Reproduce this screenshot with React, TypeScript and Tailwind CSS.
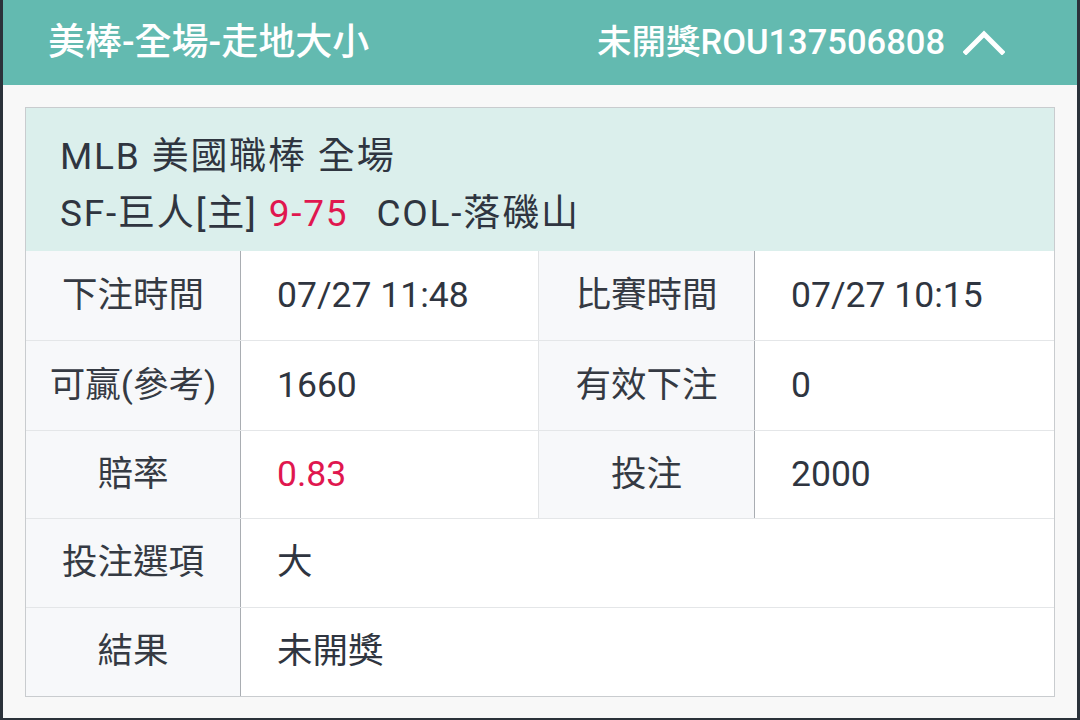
import React from "react";

const font = { fontFamily: 'Roboto, "Noto Sans CJK TC", "Noto Sans", sans-serif' };

function Row({ cols, h, children, top = true }: { cols: string; h: string; children: React.ReactNode; top?: boolean }) {
  return (
    <div className={"grid " + cols + " " + h + (top ? " border-t border-[#e4e6e8]" : "")}>
      {children}
    </div>
  );
}

function Label({ children }: { children: React.ReactNode }) {
  return (
    <div className="flex items-center justify-center bg-[#f7f8fa] border-r border-[#a9adb2] text-[#353a43]">
      {children}
    </div>
  );
}

function Value({ children, className = "" }: { children: React.ReactNode; className?: string }) {
  return (
    <div className={"flex items-center bg-white pl-[36px] text-[#2f3540] " + className}>
      {children}
    </div>
  );
}

const four = "grid-cols-[215px_298px_216px_1fr]";
const two = "grid-cols-[215px_1fr]";

export default function App() {
  return (
    <div className="w-[1080px] h-[720px] overflow-hidden bg-[#2b323a] pl-[3px] pr-[3px] pb-[2px]" style={font}>
      <div className="w-full h-full bg-[#f8f8f8] flex flex-col">
        <div className="h-[85px] bg-[#63bab0] flex items-center justify-between pl-[45px] pr-[72px] text-white font-medium shrink-0">
          <span className="text-[37px]">美棒-全場-走地大小</span>
          <div className="flex items-center">
            <span className="text-[34.5px]">未開獎ROU137506808</span>
            <svg className="ml-[18px] mb-[4px]" width="42" height="28" viewBox="0 0 42 28">
              <polyline points="3,25 21,7 39,25" fill="none" stroke="white" strokeWidth="5" strokeLinecap="square" />
            </svg>
          </div>
        </div>
        <div className="pt-[22px] pl-[22px] pr-[22px]">
          <div className="border border-[#c9cccf] text-[35.5px] leading-none">
            <div className="bg-[#dbefec] h-[143px] pl-[34px] pt-[30px] flex flex-col gap-[20px] text-[#2f3540] text-[37px] tracking-[1.8px]">
              <div>MLB 美國職棒 全場</div>
              <div>
                SF-巨人[主] <span className="text-[#e0174f]">9-75</span>
                <span className="ml-[28px]">COL-落磯山</span>
              </div>
            </div>
            <Row cols={four} h="h-[89px]" top={false}>
              <Label>下注時間</Label>
              <Value className="border-r border-[#e2e4e6]">07/27 11:48</Value>
              <Label>比賽時間</Label>
              <Value>07/27 10:15</Value>
            </Row>
            <Row cols={four} h="h-[90px]">
              <Label>可贏(參考)</Label>
              <Value className="border-r border-[#e2e4e6]">1660</Value>
              <Label>有效下注</Label>
              <Value>0</Value>
            </Row>
            <Row cols={four} h="h-[88px]">
              <Label>賠率</Label>
              <Value className="border-r border-[#e2e4e6]">
                <span className="text-[#e0174f]">0.83</span>
              </Value>
              <Label>投注</Label>
              <Value>2000</Value>
            </Row>
            <Row cols={two} h="h-[89px]">
              <Label>投注選項</Label>
              <Value>大</Value>
            </Row>
            <Row cols={two} h="h-[89px]">
              <Label>結果</Label>
              <Value>未開獎</Value>
            </Row>
          </div>
        </div>
      </div>
    </div>
  );
}
